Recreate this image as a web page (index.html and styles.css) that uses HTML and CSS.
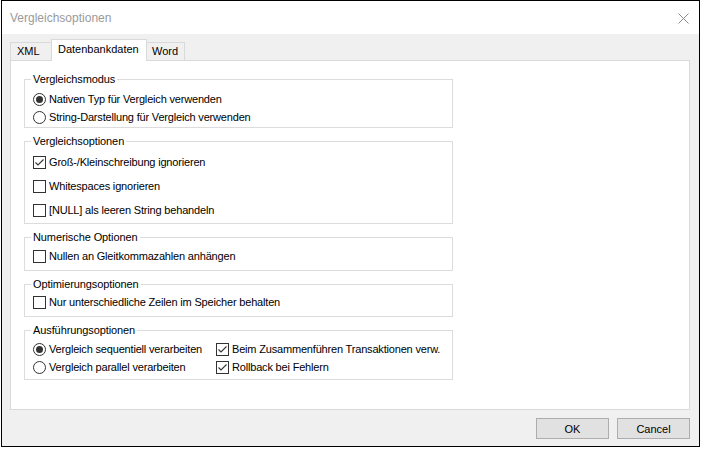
FILE: index.html
```html
<!DOCTYPE html>
<html lang="de">
<head>
<meta charset="utf-8">
<title>Vergleichsoptionen</title>
<link rel="stylesheet" href="styles.css">
</head>
<body>
<div class="window">
  <div class="titlebar">
    <span class="title">Vergleichsoptionen</span>
    <svg class="close" width="11" height="11" viewBox="0 0 11 11"><path d="M0.5 0.5 L10.5 10.5 M10.5 0.5 L0.5 10.5" stroke="#8a8a8a" stroke-width="1" fill="none"/></svg>
  </div>
  <div class="client">
    <div class="tabs">
      <div class="tab tab-xml">XML</div>
      <div class="tab tab-active">Datenbankdaten</div>
      <div class="tab tab-word">Word</div>
    </div>
    <div class="panel">
      <fieldset class="group g1">
        <legend>Vergleichsmodus</legend>
        <div class="row r18"><span class="radio checked"></span><span class="lbl">Nativen Typ für Vergleich verwenden</span></div>
        <div class="row r18"><span class="radio"></span><span class="lbl">String-Darstellung für Vergleich verwenden</span></div>
      </fieldset>
      <fieldset class="group g2">
        <legend>Vergleichsoptionen</legend>
        <div class="row r24"><span class="check checked"><svg width="11" height="11" viewBox="0 0 11 11"><path d="M1.5 5.5 L4 8 L9.5 2.5" stroke="#333" stroke-width="1.1" fill="none"/></svg></span><span class="lbl">Groß-/Kleinschreibung ignorieren</span></div>
        <div class="row r24"><span class="check"></span><span class="lbl">Whitespaces ignorieren</span></div>
        <div class="row r24"><span class="check"></span><span class="lbl">[NULL] als leeren String behandeln</span></div>
      </fieldset>
      <fieldset class="group g3">
        <legend>Numerische Optionen</legend>
        <div class="row r18"><span class="check"></span><span class="lbl">Nullen an Gleitkommazahlen anhängen</span></div>
      </fieldset>
      <fieldset class="group g4">
        <legend>Optimierungsoptionen</legend>
        <div class="row r18"><span class="check"></span><span class="lbl">Nur unterschiedliche Zeilen im Speicher behalten</span></div>
      </fieldset>
      <fieldset class="group g5">
        <legend>Ausführungsoptionen</legend>
        <div class="grid2">
          <div class="row r18"><span class="radio checked"></span><span class="lbl">Vergleich sequentiell verarbeiten</span></div>
          <div class="row r18"><span class="check checked"><svg width="11" height="11" viewBox="0 0 11 11"><path d="M1.5 5.5 L4 8 L9.5 2.5" stroke="#333" stroke-width="1.1" fill="none"/></svg></span><span class="lbl">Beim Zusammenführen Transaktionen verw.</span></div>
          <div class="row r18"><span class="radio"></span><span class="lbl">Vergleich parallel verarbeiten</span></div>
          <div class="row r18"><span class="check checked"><svg width="11" height="11" viewBox="0 0 11 11"><path d="M1.5 5.5 L4 8 L9.5 2.5" stroke="#333" stroke-width="1.1" fill="none"/></svg></span><span class="lbl">Rollback bei Fehlern</span></div>
        </div>
      </fieldset>
    </div>
    <div class="buttons">
      <button class="btn">OK</button>
      <button class="btn">Cancel</button>
    </div>
  </div>
</div>
</body>
</html>
```
FILE: styles.css
```css
html, body {
  margin: 0;
  padding: 0;
  background: #ffffff;
}
body {
  width: 702px;
  height: 450px;
  overflow: hidden;
  font-family: "Liberation Sans", Arial, sans-serif;
  font-size: 11px;
  color: #000;
}
.window {
  margin-left: 1px;
  width: 699px;
  height: 447px;
  box-sizing: border-box;
  border: 1px solid #000;
  background: #f0f0f0;
  display: flex;
  flex-direction: column;
}
.titlebar {
  height: 33px;
  flex: none;
  background: #fff;
  display: flex;
  align-items: center;
  justify-content: space-between;
  padding: 0 10px 0 8px;
}
.title {
  font-size: 12px;
  color: #9a9a9a;
  line-height: 14px;
  margin-top: 1px;
}
.close {
  display: block;
  margin-top: 1px;
}
.client {
  flex: 1;
  display: flex;
  flex-direction: column;
  padding: 5px 9px 0 8px;
}
.tabs {
  height: 21px;
  display: flex;
  align-items: flex-end;
}
.tab {
  box-sizing: border-box;
  border: 1px solid #d9d9d9;
  border-bottom: none;
  background: #f0f0f0;
  height: 18px;
  line-height: 16px;
  padding-left: 6px;
}
.tab-xml {
  width: 42px;
  padding-left: 6px;
}
.tab-active {
  width: 96px;
  height: 22px;
  margin-left: -1px;
  margin-bottom: -1px;
  background: #fff;
  position: relative;
  z-index: 1;
  line-height: 19px;
  padding-left: 6px;
}
.tab-word {
  width: 39px;
  margin-left: -1px;
  padding-left: 5px;
}
.panel {
  box-sizing: border-box;
  width: 680px;
  height: 350px;
  border: 1px solid #d9d9d9;
  background: #fff;
  padding: 12px 0 0 13px;
  display: flex;
  flex-direction: column;
}
.group {
  box-sizing: border-box;
  width: 429px;
  margin: 0 0 7px 0;
  border: 1px solid #dcdcdc;
  padding: 0 0 0 8px;
  min-width: 0;
}
.group legend {
  padding: 0 2px;
  margin-left: -2px;
  line-height: 13px;
  letter-spacing: -0.1px;
}
.g1 { padding-top: 4px; padding-bottom: 1px; }
.g2 { padding-top: 2px; padding-bottom: 1px; }
.g3 { padding-top: 3px; padding-bottom: 5px; }
.g4 { padding-top: 2px; padding-bottom: 5px; }
.g5 { padding-top: 3px; padding-bottom: 3px; }
.row {
  display: flex;
  align-items: center;
  white-space: nowrap;
}
.r18 { height: 18px; }
.r24 { height: 24px; }
.lbl {
  margin-left: 3px;
  line-height: 13px;
  letter-spacing: -0.18px;
}
.radio {
  box-sizing: border-box;
  width: 13px;
  height: 13px;
  border: 1px solid #333;
  border-radius: 50%;
  background: #fff;
  display: flex;
  align-items: center;
  justify-content: center;
  flex: none;
}
.radio.checked::after {
  content: "";
  width: 7px;
  height: 7px;
  border-radius: 50%;
  background: #333;
}
.check {
  box-sizing: border-box;
  width: 13px;
  height: 13px;
  border: 1px solid #333;
  background: #fff;
  display: flex;
  align-items: center;
  justify-content: center;
  flex: none;
}
.check svg {
  display: block;
}
.grid2 {
  display: grid;
  grid-template-columns: 183px auto;
}
.buttons {
  display: flex;
  justify-content: flex-end;
  gap: 8px;
  margin-top: 8px;
}
.btn {
  box-sizing: border-box;
  width: 73px;
  height: 21px;
  border: 1px solid #adadad;
  background: #e1e1e1;
  font-family: "Liberation Sans", Arial, sans-serif;
  font-size: 11px;
  color: #000;
  padding: 0;
  margin: 0;
}
```
